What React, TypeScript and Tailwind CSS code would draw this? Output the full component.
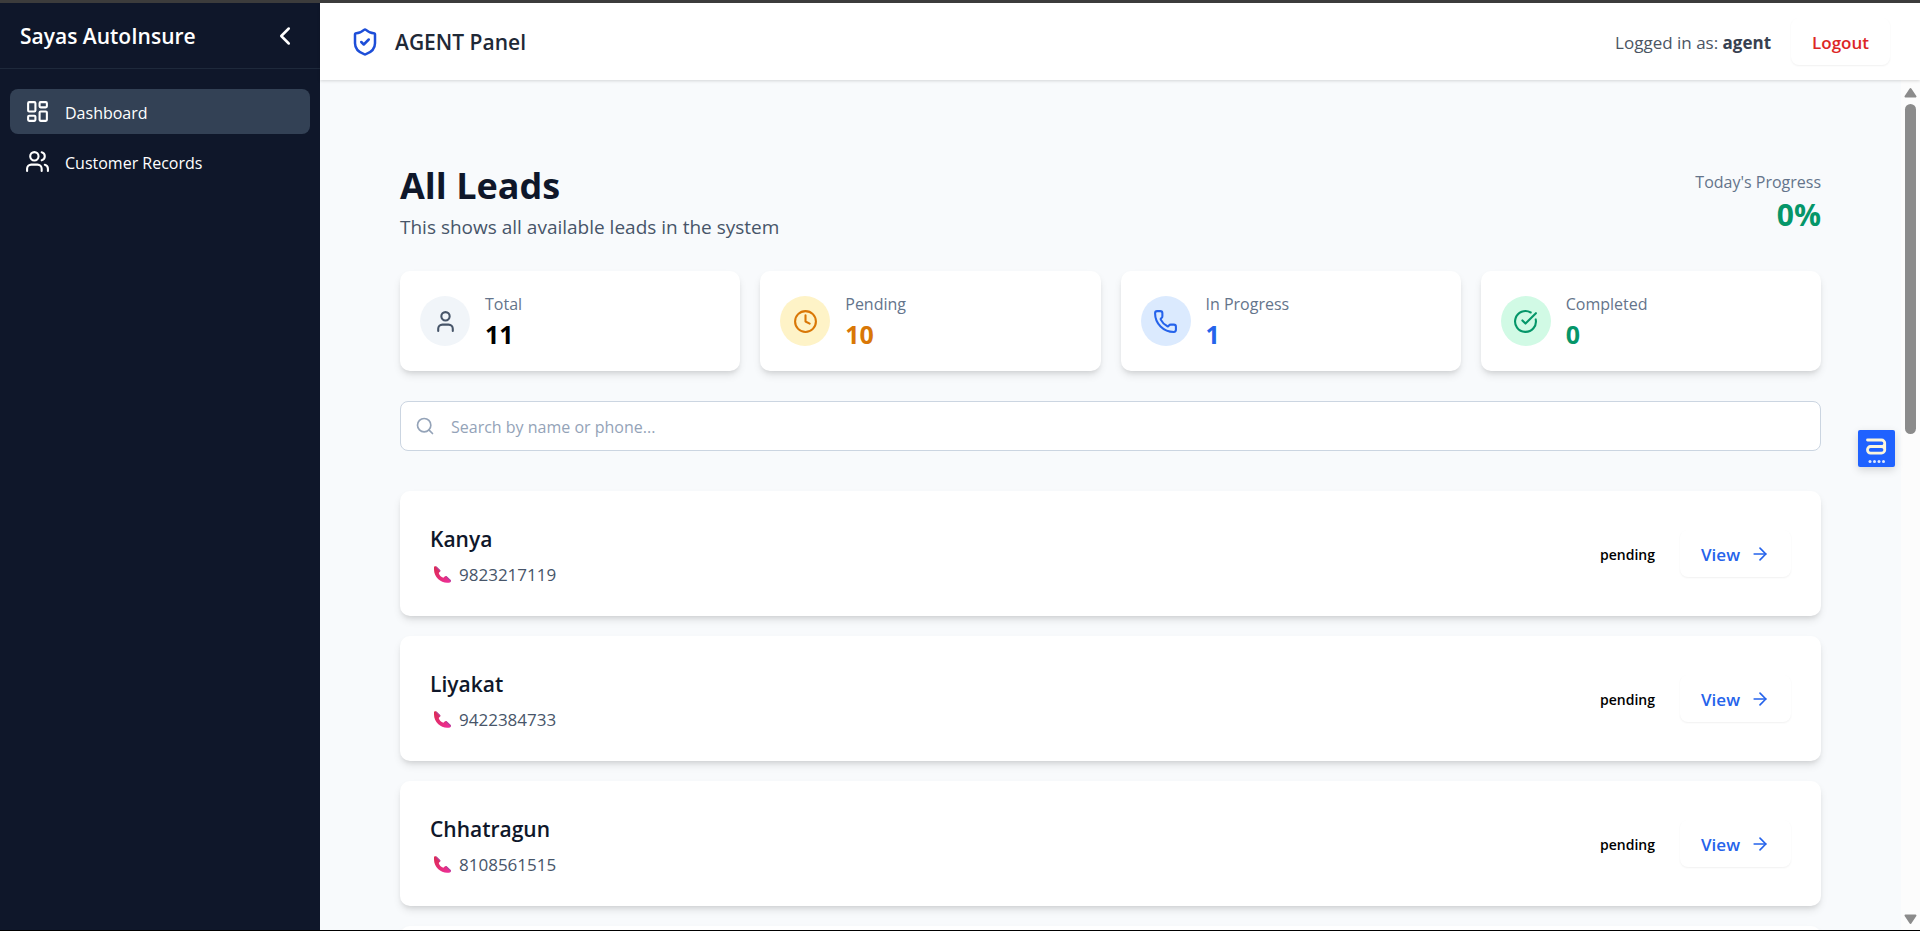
import {
  ArrowRight,
  ChevronLeft,
  CircleCheckBig,
  Clock,
  LayoutDashboard,
  Phone,
  Search,
  ShieldCheck,
  User,
  Users,
  type LucideIcon,
} from "lucide-react";

const stats: { label: string; value: number; icon: LucideIcon; badge: string; color: string }[] = [
  { label: "Total", value: 11, icon: User, badge: "bg-[#f1f5f9] text-[#475569]", color: "text-black" },
  { label: "Pending", value: 10, icon: Clock, badge: "bg-[#fef3c7] text-[#d97706]", color: "text-[#d97706]" },
  { label: "In Progress", value: 1, icon: Phone, badge: "bg-[#dbeafe] text-[#2563eb]", color: "text-[#2563eb]" },
  { label: "Completed", value: 0, icon: CircleCheckBig, badge: "bg-[#d1fae5] text-[#059669]", color: "text-[#059669]" },
];

const leads = [
  { name: "Kanya", phone: "9823217119", status: "pending" },
  { name: "Liyakat", phone: "9422384733", status: "pending" },
  { name: "Chhatragun", phone: "8108561515", status: "pending" },
];

const cardShadow = "shadow-[0_5px_8px_-1px_rgba(0,0,0,0.1),0_3px_5px_-2px_rgba(0,0,0,0.1)]";

function Sidebar() {
  return (
    <aside className="flex w-80 shrink-0 flex-col bg-[#0f172a] text-white">
      <div className="flex h-[66px] items-center justify-between border-b border-[#1e293b] px-5">
        <span className="pt-0.5 text-[21px] font-semibold">Sayas AutoInsure</span>
        <button type="button" aria-label="Collapse sidebar">
          <ChevronLeft size={30} />
        </button>
      </div>
      <nav className="flex flex-col gap-[5px] px-2.5 pt-5 text-[16px]">
        <a href="#dashboard" className="flex h-[45px] items-center gap-[15px] rounded-lg bg-[#334155] px-[15px]">
          <LayoutDashboard size={25} />
          <span className="pt-0.5">Dashboard</span>
        </a>
        <a href="#customers" className="flex h-[45px] items-center gap-[15px] rounded-lg px-[15px]">
          <Users size={25} />
          <span className="pt-0.5">Customer Records</span>
        </a>
      </nav>
    </aside>
  );
}

function TopBar() {
  return (
    <header className="z-10 flex h-[77px] shrink-0 items-center justify-between bg-white px-[30px] shadow-[0_1px_3px_rgba(0,0,0,0.15)]">
      <div className="flex items-center gap-[15px]">
        <ShieldCheck size={30} className="text-[#1d4ed8]" />
        <h1 className="pt-0.5 text-[21px] font-semibold text-[#1f2937]">AGENT Panel</h1>
      </div>
      <div className="flex items-center gap-5">
        <span className="pt-0.5 text-[17px] text-[#4b5563]">
          Logged in as: <strong className="font-bold text-[#374151]">agent</strong>
        </span>
        <button
          type="button"
          className="h-[47px] rounded-lg bg-white px-[21px] pt-0.5 text-[17px] font-semibold text-[#dc2626] shadow-[0_1px_2px_rgba(0,0,0,0.06)]"
        >
          Logout
        </button>
      </div>
    </header>
  );
}

function PhoneReceiver() {
  return (
    <svg width="19" height="19" viewBox="0 0 19 19" className="shrink-0" aria-hidden="true">
      <defs>
        <linearGradient id="receiver" x1="0" y1="0" x2="1" y2="1">
          <stop offset="0" stopColor="#dc2b50" />
          <stop offset="1" stopColor="#ee2f9c" />
        </linearGradient>
      </defs>
      <path
        d="M1 2.2C1 1.2 2.6.8 3.4 1.5L7 5c.6.6.4 1.2-.1 1.8L5.7 8c.6 2.2 2.3 4 4.700 4.700l1.300-1.200c.6-.6 1.300-.7 1.900-.2l4 3.800c.7.8.3 1.900-.6 2.300C9.500 19.400 1 13 1 4.500Z"
        fill="url(#receiver)"
      />
      <path d="M3.400 1.500 7 5c.6.6.4 1.200-.1 1.800L3 2.500ZM13.600 11.300l4 3.800c.5.6.4 1.200 0 1.700l-5-5.100Z" fill="#b044a0" />
    </svg>
  );
}

function AssistantBadge() {
  return (
    <button
      type="button"
      aria-label="Open assistant"
      className="absolute top-[427px] right-[25px] z-20 h-[37px] w-[37px] rounded-[2px] bg-[#1f62ff] shadow-[0_3px_8px_rgba(0,0,0,0.15)]"
    >
      <svg width="37" height="37" viewBox="0 0 37 37" fill="none" aria-hidden="true">
        <path
          d="M9.500 10H23.500a3.200 3.200 0 0 1 0 6.500H12.500a3 3 0 0 0-3 3v.6a3 3 0 0 0 3 3H23.500a3.300 3.300 0 0 0 0-6.600M26.700 12.800v7.400"
          stroke="#fbf5dc"
          strokeWidth="2.800"
          strokeLinecap="round"
        />
        <g fill="#dfe9ff">
          <circle cx="12" cy="31.500" r="1.500" />
          <circle cx="16.500" cy="31.500" r="1.500" />
          <circle cx="21" cy="31.500" r="1.500" />
          <circle cx="25.500" cy="31.500" r="1.500" />
        </g>
      </svg>
    </button>
  );
}

function ScrollRail() {
  return (
    <div className="flex w-[19px] shrink-0 flex-col items-center bg-[#fcfcfc] pt-1.5 pb-1" aria-hidden="true">
      <svg width="13" height="12" viewBox="0 0 13 12" className="shrink-0">
        <path d="M6.500 3 11.500 10.500H1.500Z" fill="#8b8b8b" stroke="#8b8b8b" strokeWidth="2" strokeLinejoin="round" />
      </svg>
      <div className="flex w-[11px] grow flex-col py-[6px]">
        <div className="h-[41%] rounded-full bg-[#8b8b8b]" />
      </div>
      <svg width="13" height="12" viewBox="0 0 13 12" className="shrink-0">
        <path d="M6.500 9 11.500 1.500H1.500Z" fill="#8b8b8b" stroke="#8b8b8b" strokeWidth="2" strokeLinejoin="round" />
      </svg>
    </div>
  );
}

export default function App() {
  return (
    <div className="relative flex h-screen overflow-hidden border-t-[3px] border-b border-t-[#3c3c3c] border-b-black bg-[#f8fafc] font-['Open_Sans','Noto_Sans',sans-serif]">
      <Sidebar />
      <div className="flex min-w-0 grow flex-col">
        <TopBar />
        <div className="flex min-h-0 grow">
          <main className="min-w-0 grow overflow-y-auto px-20 pt-[81px] [scrollbar-width:none]">
            <div className="flex items-center justify-between">
              <div>
                <h2 className="text-[36px] leading-[50px] font-bold text-[#0f172a]">All Leads</h2>
                <p className="text-[19px] leading-[32px] text-[#475569]">This shows all available leads in the system</p>
              </div>
              <div className="text-right">
                <p className="text-[16px] leading-[25px] text-[#64748b]">Today's Progress</p>
                <p className="text-[30px] leading-[40px] font-bold text-[#059669]">0%</p>
              </div>
            </div>

            <section className="mt-[28px] grid grid-cols-4 gap-5">
              {stats.map(({ label, value, icon: Icon, badge, color }) => (
                <div key={label} className={`flex h-[100px] items-center gap-[15px] rounded-[10px] bg-white px-5 ${cardShadow}`}>
                  <div className={`flex size-[50px] items-center justify-center rounded-full ${badge}`}>
                    <Icon size={25} />
                  </div>
                  <div className="pt-0.5">
                    <p className="text-[16px] leading-[25px] text-[#64748b]">{label}</p>
                    <p className={`text-[25px] leading-[35px] font-bold ${color}`}>{value}</p>
                  </div>
                </div>
              ))}
            </section>

            <label className="mt-[30px] flex h-[50px] items-center gap-4 rounded-lg border border-[#cbd5e1] bg-white px-[14px]">
              <Search size={20} className="shrink-0 text-[#94a3b8]" />
              <input
                type="text"
                aria-label="Search leads"
                placeholder="Search by name or phone..."
                className="min-w-0 grow bg-transparent pt-0.5 text-[16px] outline-none placeholder:text-[#94a3b8]"
              />
            </label>

            <section className="mt-10 flex flex-col gap-5">
              {leads.map((lead) => (
                <article
                  key={lead.phone}
                  className={`flex h-[125px] items-center justify-between rounded-[10px] bg-white px-[30px] ${cardShadow}`}
                >
                  <div className="pt-1.5">
                    <h3 className="text-[21px] leading-[35px] font-semibold text-[#0f172a]">{lead.name}</h3>
                    <p className="flex items-center gap-[7px] pl-[3px] text-[17px] leading-[35px] text-[#475569]">
                      <PhoneReceiver />
                      {lead.phone}
                    </p>
                  </div>
                  <div className="flex items-center gap-[25px]">
                    <span className="pt-0.5 text-[14px] font-semibold text-black">{lead.status}</span>
                    <button
                      type="button"
                      className="flex h-[47px] items-center gap-[10px] rounded-lg bg-white px-[21px] text-[17px] font-semibold text-[#2563eb] shadow-[0_1px_2px_rgba(0,0,0,0.06)]"
                    >
                      <span className="pt-0.5">View</span>
                      <ArrowRight size={20} />
                    </button>
                  </div>
                </article>
              ))}
              <div className={`h-[125px] shrink-0 rounded-[10px] bg-white ${cardShadow}`} />
            </section>
          </main>
          <ScrollRail />
        </div>
      </div>
      <AssistantBadge />
    </div>
  );
}
